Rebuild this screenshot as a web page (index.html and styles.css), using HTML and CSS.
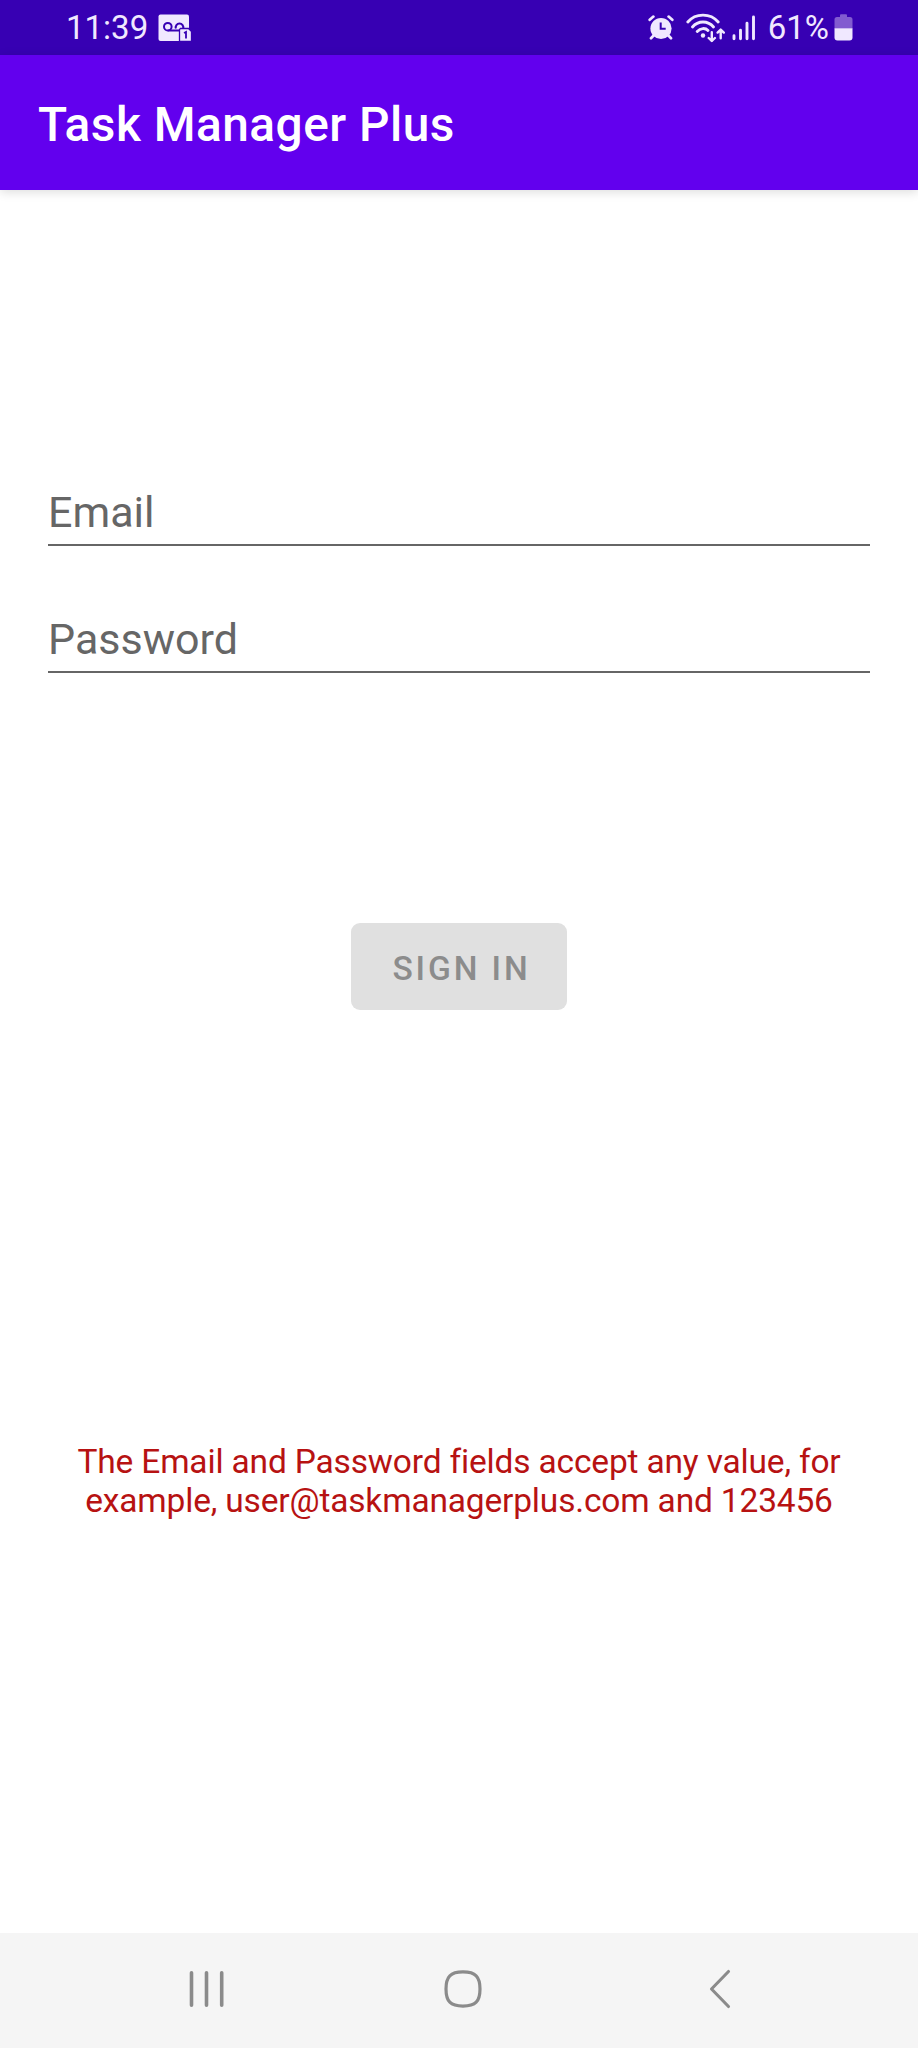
FILE: index.html
```html
<!DOCTYPE html>
<html lang="en">
<head>
<meta charset="utf-8">
<title>Task Manager Plus</title>
<link rel="stylesheet" href="styles.css">
</head>
<body>
<div class="screen">
  <header class="status-bar">
    <div class="status-left">
      <span class="clock">11:39</span>
      <svg class="voicemail" width="34" height="28" viewBox="0 0 34 28">
        <rect x="0.5" y="0.5" width="30.5" height="26.5" rx="2" fill="#f0e8ff"/>
        <g fill="none" stroke="#3700b3" stroke-width="2">
          <circle cx="9.8" cy="12.7" r="3.8"/>
          <path d="M9.8 16.5h12M17.9 14.5a3.8 3.8 0 1 1 7.2 0"/>
        </g>
        <path d="M22.5 14.5h8l3 3v10h-12v-12z" fill="#f0e8ff" stroke="#3700b3" stroke-width="1.3"/>
        <path d="M26 19l2-1v6.5" fill="none" stroke="#3700b3" stroke-width="1.8"/>
      </svg>
    </div>
    <div class="status-right">
      <svg class="alarm" width="26" height="26" viewBox="0 0 26 26">
        <circle cx="13" cy="13.5" r="10.6" fill="#f0e8ff"/>
        <path d="M1.7 4.8L5.4 1.6M20.6 1.6L24.3 4.8M5.6 20.5L3 23.2M20.4 20.5L23 23.2" stroke="#f0e8ff" stroke-width="2.7" stroke-linecap="round"/>
        <path d="M12.7 7.5v6.2h5" fill="none" stroke="#3700b3" stroke-width="2"/>
      </svg>
      <svg class="wifi" width="39" height="30" viewBox="0 0 39 30" fill="none" stroke="#f0e8ff" stroke-width="2.8" stroke-linecap="round" stroke-linejoin="round">
        <path d="M1.8 9C9.5-0.3 24.5-0.3 32.2 9M6.5 14C12 7.3 22 7.3 27.5 14M11.2 18.5C14.5 14.7 19.5 14.7 22 17.5"/>
        <circle cx="17" cy="22.5" r="2.2" fill="#f0e8ff" stroke="none"/>
        <path stroke-width="2.4" d="M25.8 19.3v8.6M22.7 25l3.1 3 3.1-3M34.7 25.2v-8.4M31.6 19.6l3.1-3 3.1 3"/>
      </svg>
      <svg class="signal" width="24" height="26" viewBox="0 0 24 26" stroke="#f0e8ff" stroke-width="2.9" stroke-linecap="round">
        <path d="M2 20.8v3M8.500 15.300v8.500M15 8.200v15.600M21.500 2v21.800"/>
      </svg>
      <span class="percent">61%</span>
      <svg class="battery" width="20" height="27" viewBox="0 0 20 27">
        <path d="M3 3h3V1.400Q6 .3 7 .3h5q1 0 1 1.100V3h3q2.500 0 2.500 2.500v9H.5v-9Q.5 3 3 3z" fill="#825bd0"/>
        <path d="M.5 14.300h18v9.200q0 3-3 3h-12q-3 0-3-3z" fill="#f0e8ff"/>
      </svg>
    </div>
  </header>
  <div class="app-bar"><h1 class="title">Task Manager Plus</h1></div>
  <main class="content">
    <form class="form">
      <input class="field" type="email" placeholder="Email" aria-label="Email">
      <input class="field" type="password" placeholder="Password" aria-label="Password">
      <button class="sign-in" type="button" disabled>SIGN IN</button>
    </form>
    <p class="hint">The Email and Password fields accept any value, for<br>example, user@taskmanagerplus.com and 123456</p>
  </main>
  <nav class="nav-bar">
    <svg class="recents" width="36" height="38" viewBox="0 0 36 38" stroke="#8b8b8b" stroke-width="3.600" stroke-linecap="round">
      <path d="M2.500 2.800v32.400M17.500 2.800v32.400M32.700 2.800v32.400"/>
    </svg>
    <svg class="home" width="38" height="38" viewBox="0 0 38 38">
      <path d="M19 1.900C31.500 1.900 36 6.500 36 19S31.500 36.100 19 36.100 2 31.500 2 19 6.500 1.900 19 1.900z" fill="none" stroke="#8b8b8b" stroke-width="3.200"/>
    </svg>
    <svg class="back" width="22" height="40" viewBox="0 0 22 40">
      <path d="M19.500 2.500L2.500 20l17 17.500" fill="none" stroke="#8b8b8b" stroke-width="3.100" stroke-linecap="round" stroke-linejoin="round"/>
    </svg>
  </nav>
</div>
</body>
</html>
```
FILE: styles.css
```css
* { box-sizing: border-box; }

body {
  margin: 0;
  font-family: Roboto, "Liberation Sans", sans-serif;
  background: #fff;
}

.screen {
  display: flex;
  flex-direction: column;
  height: 2048px;
}

.status-bar {
  display: flex;
  justify-content: space-between;
  height: 55px;
  padding: 0 64px 0 66px;
  background: #3700b3;
  color: #f0e8ff;
  font-size: 33px;
  line-height: 55px;
}

.status-left,
.status-right {
  display: flex;
  align-items: flex-start;
}

.voicemail { margin: 14px 0 0 10px; }
.alarm { margin-top: 15px; }
.wifi { margin: 13px 0 0 12px; }
.signal { margin: 15px 0 0 7px; }
.percent { margin-left: 11.5px; }
.battery { margin: 14px 0 0 5px; }

.app-bar {
  position: relative;
  height: 134.5px;
  padding: 42px 0 0 38px;
  background: #6200ee;
  box-shadow: 0 2px 10px rgba(0, 0, 0, 0.14);
}

.title {
  margin: 0;
  color: #fff;
  font-size: 47.8px;
  font-weight: 500;
  letter-spacing: 0.5px;
  line-height: 56px;
}

.content {
  flex: 1;
  background: #fff;
}

.form {
  display: flex;
  flex-direction: column;
  padding: 294.5px 48px 0;
}

.field {
  width: 100%;
  height: 62px;
  margin: 0 0 65px;
  padding: 0 0 5px;
  border: 0;
  border-bottom: 2px solid #666;
  border-radius: 0;
  background: none;
  font: 43px/54px Roboto, "Liberation Sans", sans-serif;
}

.field::placeholder {
  color: #666;
  opacity: 1;
}

.sign-in {
  align-self: center;
  width: 216px;
  height: 87px;
  margin-top: 185px;
  padding: 5px 0 0 5px;
  border: 0;
  border-radius: 9px;
  background: #e0e0e0;
  color: #8c8c8c;
  font: 500 33.5px/40px Roboto, "Liberation Sans", sans-serif;
  letter-spacing: 2.9px;
}

.hint {
  margin: 431.5px 0 0;
  color: #b71212;
  font-size: 33.5px;
  letter-spacing: -0.17px;
  line-height: 39.3px;
  text-align: center;
}

.nav-bar {
  display: grid;
  grid-template-columns: 255.3px 265.5px 22px;
  align-items: center;
  height: 115px;
  padding: 0 0 3px 188.7px;
  background: #f5f5f5;
}
```
